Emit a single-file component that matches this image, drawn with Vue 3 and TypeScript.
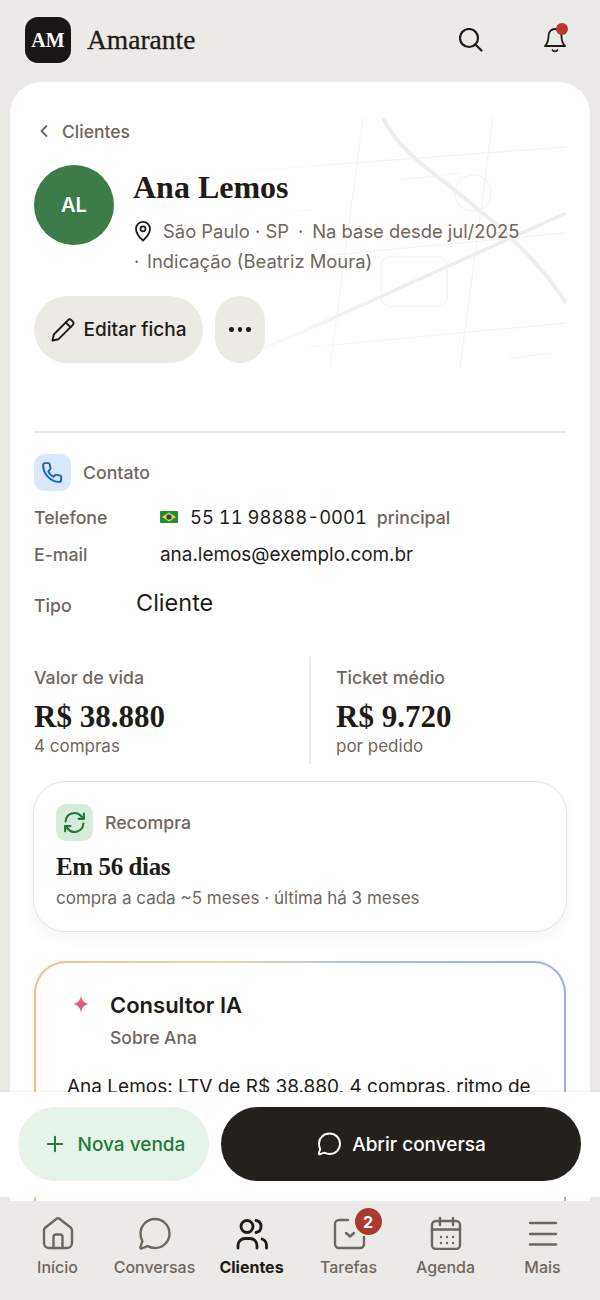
<script setup lang="ts">
/** Ficha do cliente — tela mobile */
interface Tab {
  label: string
  paths: string[]
  active?: boolean
  badge?: number
}

const tabs: Tab[] = [
  { label: 'Início', paths: ['M3 14.500a4 4 0 0 1 1.400-3L15 3.200a3 3 0 0 1 4 0l10.600 8.300a4 4 0 0 1 1.400 3V27a5 5 0 0 1-5 5H8a5 5 0 0 1-5-5Z', 'M12.500 32V21a2.500 2.500 0 0 1 2.500-2.500h4a2.500 2.500 0 0 1 2.500 2.500v11'] },
  { label: 'Conversas', paths: ['M17 3C25 3 31.500 9.500 31.500 17.500S25 32 17 32c-2.700 0-5.200-.7-7.300-1.900L3.500 32.500c-.7.2-1.300-.4-1.100-1.100l2-6.300C3 22.800 2.500 20.200 2.500 17.500 2.500 9.500 9 3 17 3Z'] },
  { label: 'Clientes', active: true, paths: ['M12 4.500a6 6 0 1 1 0 12 6 6 0 0 1 0-12Z', 'M21 4.500c3.200.5 5 3 5 6s-1.800 5.500-5 6', 'M3 32v-2.500a7 7 0 0 1 7-7h5a7 7 0 0 1 7 7V32', 'M27 23c2.500 1 4.500 3.500 4.500 6.500V32'] },
  { label: 'Tarefas', badge: 2, paths: ['M16 4H7a4 4 0 0 0-4 4v20a4 4 0 0 0 4 4h21a4 4 0 0 0 4-4v-7', 'M14 17l4 3.500 4-3.500'] },
  { label: 'Agenda', paths: ['M7 5h20a4 4 0 0 1 4 4v20a4 4 0 0 1-4 4H7a4 4 0 0 1-4-4V9a4 4 0 0 1 4-4Z', 'M3 13.500h28', 'M11 2v7', 'M24 2v7'] },
  { label: 'Mais', paths: ['M4 7h26', 'M4 18h26', 'M4 28.500h26'] },
]

const calendarDots = [
  [12, 21], [18, 21], [24, 21],
  [12, 27], [18, 27], [24, 27],
]
</script>

<template>
  <div class="screen">
    <header class="topbar">
      <div class="brand">
        <span class="logo">AM</span>
        <span class="brand-name">Amarante</span>
      </div>
      <div class="top-actions">
        <svg class="ic-search" viewBox="0 0 24 24" fill="none" stroke="#1f1b17" stroke-width="2.200" stroke-linecap="round">
          <circle cx="10" cy="10" r="9" />
          <path d="M16.500 16.500l6 6" />
        </svg>
        <div class="bell">
          <svg viewBox="0 0 24 26" fill="none" stroke="#1f1b17" stroke-width="1.800" stroke-linecap="round" stroke-linejoin="round">
            <path d="M12 2c-4 0-6.500 3-6.500 7 0 5-1.500 8-3.500 10h20c-2-2-3.500-5-3.500-10C18.500 5 16 2 12 2Z" />
            <path d="M9.500 23c.7 1.800 4.300 1.800 5 0" />
          </svg>
          <span class="bell-dot"></span>
        </div>
      </div>
    </header>

    <main class="sheet">
      <section class="hero">
        <svg class="map" viewBox="200 118 366 262" fill="none" stroke="#f3f2f0" stroke-width="1.200">
          <path class="thick" d="M383 118C398 150 430 170 467 200S540 262 566 303" stroke-width="4" />
          <path class="thick" d="M253 352 300 333 566 213" stroke-width="3.500" />
          <path d="M207 174 566 147" />
          <path d="M400 180 460 173" />
          <path d="M363 118 330 367" />
          <path d="M493 118 460 368" />
          <path d="M300 258 566 233" />
          <path d="M300 348 566 323" />
          <path d="M510 358 553 353" />
          <path d="M235 118 230 158" />
          <path d="M275 212 315 210" />
          <circle cx="473" cy="193" r="18" />
          <rect x="381" y="257" width="66" height="49" rx="8" />
        </svg>

        <div class="back">
          <svg viewBox="0 0 12 16" fill="none" stroke="#6f675e" stroke-width="1.800" stroke-linecap="round" stroke-linejoin="round">
            <path d="M8.500 3 3.500 8l5 5" />
          </svg>
          <span>Clientes</span>
        </div>

        <div class="identity">
          <div class="avatar">AL</div>
          <div class="identity-text">
            <h1>Ana Lemos</h1>
            <div class="meta">
              <div class="meta-line">
                <svg class="pin" viewBox="0 0 20 22" fill="none" stroke="#1f1b17" stroke-width="1.800" stroke-linejoin="round">
                  <path d="M10 20.500S3 14.500 3 8.800a7 7 0 0 1 14 0c0 5.700-7 11.700-7 11.700Z" />
                  <circle cx="10" cy="8.800" r="2.500" />
                </svg>
                <span>São Paulo · SP</span>
                <span class="sep">·</span>
                <span>Na base desde jul/2025</span>
              </div>
              <div class="meta-line">
                <span class="sep2">·</span>
                <span>Indicação (Beatriz Moura)</span>
              </div>
            </div>
          </div>
        </div>

        <div class="hero-actions">
          <button class="pill edit" type="button">
            <svg viewBox="0 0 24 24" fill="none" stroke="#1f1b17" stroke-width="1.900" stroke-linejoin="round" stroke-linecap="round">
              <path d="M1.500 22.500l1.300-6L16.800 2.300a2.700 2.700 0 0 1 3.800 0l1 1a2.700 2.700 0 0 1 0 3.800L7.500 21.200Z" />
              <path d="M14.800 4.500l4.700 4.700" />
            </svg>
            Editar ficha
          </button>
          <button class="pill more" type="button" aria-label="Mais">
            <i></i><i></i><i></i>
          </button>
        </div>
      </section>

      <section class="contact">
        <div class="section-head">
          <span class="icon-box blue">
            <svg viewBox="0 0 24 24" fill="none" stroke="#1d62c4" stroke-width="1.900" stroke-linejoin="round">
              <path d="M5 3h3.200a1 1 0 0 1 1 .8l.9 3.900a1 1 0 0 1-.3 1L8 11.200c1.100 2.400 2.600 3.900 5 5l1.600-1.800a1 1 0 0 1 1-.3l3.900.9a1 1 0 0 1 .8 1V19a2 2 0 0 1-2 2C10.500 21 3 13.500 3 5a2 2 0 0 1 2-2Z" />
            </svg>
          </span>
          <span>Contato</span>
        </div>
        <div class="row phone">
          <span class="row-label">Telefone</span>
          <svg class="flag" viewBox="0 0 18 12">
            <rect width="18" height="12" rx="1" fill="#1f8f3f" />
            <path d="M9 1.500 16 6l-7 4.500L2 6Z" fill="#f4d21f" />
            <circle cx="9" cy="6" r="2.600" fill="#1d3f8f" />
          </svg>
          <span class="phone-no">55 11 98888-0001</span>
          <span class="phone-tag">principal</span>
        </div>
        <div class="row mail">
          <span class="row-label">E-mail</span>
          <span class="mail-value">ana.lemos@exemplo.com.br</span>
        </div>
        <div class="row kind">
          <span class="row-label">Tipo</span>
          <span class="kind-value">Cliente</span>
        </div>
      </section>

      <section class="stats">
        <div class="stat">
          <span class="stat-label">Valor de vida</span>
          <strong>R$ 38.880</strong>
          <span class="stat-sub">4 compras</span>
        </div>
        <div class="stat second">
          <span class="stat-label">Ticket médio</span>
          <strong>R$ 9.720</strong>
          <span class="stat-sub">por pedido</span>
        </div>
      </section>

      <section class="card rebuy">
        <div class="section-head">
          <span class="icon-box green">
            <svg viewBox="0 0 24 24" fill="none" stroke="#23763c" stroke-width="2" stroke-linecap="round" stroke-linejoin="round">
              <path d="M3.500 11A8.500 8.500 0 0 1 18.500 6L21 8.500" />
              <path d="M21 3.500v5h-5" />
              <path d="M20.500 13A8.500 8.500 0 0 1 5.500 18L3 15.500" />
              <path d="M3 20.500v-5h5" />
            </svg>
          </span>
          <span>Recompra</span>
        </div>
        <h2>Em 56 dias</h2>
        <p>compra a cada ~5 meses · última há 3 meses</p>
      </section>

      <section class="advisor">
        <div class="advisor-head">
          <svg class="spark" viewBox="0 0 20 20">
            <defs>
              <linearGradient id="spark" x1="0.300" y1="0" x2="0.700" y2="1">
                <stop offset="0" stop-color="#f2913d" />
                <stop offset="0.500" stop-color="#e8557a" />
                <stop offset="1" stop-color="#a45fe0" />
              </linearGradient>
            </defs>
            <path d="M10 0c.8 5.600 3 8.800 8.500 10-5.500 1.200-7.700 4.400-8.500 10-.8-5.600-3-8.800-8.500-10C7 8.800 9.200 5.600 10 0Z" fill="url(#spark)" />
          </svg>
          <div>
            <h3>Consultor IA</h3>
            <span>Sobre Ana</span>
          </div>
        </div>
        <p>Ana Lemos: LTV de R$ 38.880, 4 compras, ritmo de</p>
      </section>
    </main>

    <div class="action-bar">
      <button class="cta sale" type="button">
        <svg viewBox="0 0 20 20" fill="none" stroke="#1f7a3d" stroke-width="2.200" stroke-linecap="round">
          <path d="M10 2v16M2 10h16" />
        </svg>
        Nova venda
      </button>
      <button class="cta chat" type="button">
        <svg viewBox="0 0 26 26" fill="none" stroke="#fff" stroke-width="1.900" stroke-linejoin="round">
          <path d="M13.500 2.500C19.500 2.500 24 7 24 12.800S19.500 23 13.500 23c-1.900 0-3.600-.5-5.100-1.300L3.500 23.300c-.5.200-.9-.3-.8-.7l1.500-4.400C3.400 16.700 3 14.800 3 12.800 3 7 7.500 2.500 13.500 2.500Z" />
        </svg>
        Abrir conversa
      </button>
    </div>

    <nav class="tabbar">
      <div v-for="tab in tabs" :key="tab.label" class="tab" :class="{ active: tab.active }">
        <div class="tab-icon">
          <svg viewBox="0 0 34 34" fill="none" stroke="currentColor" stroke-width="2.400" stroke-linecap="round" stroke-linejoin="round">
            <path v-for="d in tab.paths" :key="d" :d="d" />
            <template v-if="tab.label === 'Agenda'">
              <circle v-for="p in calendarDots" :key="p.join()" :cx="p[0]" :cy="p[1]" r="1.200" fill="currentColor" stroke="none" />
            </template>
          </svg>
          <span v-if="tab.badge" class="tab-badge">{{ tab.badge }}</span>
        </div>
        <span class="tab-label">{{ tab.label }}</span>
      </div>
    </nav>
  </div>
</template>

<style>
html, body { margin: 0; background: #ebeae6; }
</style>

<style scoped>
.screen {
  position: relative;
  width: 600px;
  height: 1300px;
  overflow: hidden;
  background: #ebeae6;
  font-family: Inter, "Liberation Sans", sans-serif;
  color: #1f1b17;
  display: flex;
  flex-direction: column;
}

/* Topo */
.topbar {
  flex: none;
  height: 82px;
  padding: 0 33px 2px 25px;
  box-sizing: border-box;
  display: flex;
  align-items: center;
  justify-content: space-between;
}
.brand { display: flex; align-items: center; gap: 16px; }
.logo {
  width: 46px;
  height: 46px;
  border-radius: 13px;
  background: #1a1613;
  color: #fff;
  font: 700 20px "Liberation Serif", serif;
  display: flex;
  align-items: center;
  justify-content: center;
}
.brand-name {
  font: 400 27.500px "Liberation Serif", serif;
  -webkit-text-stroke: 0.3px #1f1b17;
}
.top-actions { display: flex; align-items: center; gap: 60px; }
.ic-search { width: 24px; height: 24px; display: block; }
.bell { position: relative; width: 24px; height: 26px; }
.bell svg { width: 24px; height: 26px; display: block; }
.bell-dot {
  position: absolute;
  top: -4px;
  right: -1px;
  width: 12px;
  height: 12px;
  border-radius: 50%;
  background: #b5382c;
}

/* Folha branca */
.sheet {
  flex: 1;
  margin: 0 10px;
  background: #fff;
  border-radius: 32px 32px 0 0;
  padding: 0 24px;
  overflow: hidden;
}

.hero {
  position: relative;
  padding-top: 36px;
  height: 277px;
  padding-bottom: 36px;
  border-bottom: 2px solid #e8e7e3;
}
.map {
  position: absolute;
  left: 166px;
  top: 36px;
  width: 366px;
  height: 262px;
  -webkit-mask-image: linear-gradient(90deg, transparent 5%, #000 50%);
  mask-image: linear-gradient(90deg, transparent 5%, #000 50%);
}
.map .thick { stroke: #efeeeb; }
.back {
  position: relative;
  display: flex;
  align-items: center;
  gap: 12px;
  height: 26px;
  color: #6f675e;
  font-size: 17.500px;
  font-weight: 500;
}
.back svg { width: 12px; height: 16px; margin-left: 4px; }

.identity {
  position: relative;
  display: flex;
  gap: 19px;
  margin-top: 21px;
}
.avatar {
  flex: none;
  width: 80px;
  height: 80px;
  border-radius: 50%;
  background: #3d7c48;
  color: #fff;
  font-size: 20px;
  font-weight: 600;
  display: flex;
  align-items: center;
  justify-content: center;
}
.identity-text { min-width: 0; }
h1 {
  margin: 0;
  font: 700 32px/44px "Liberation Serif", serif;
}
.meta {
  margin-top: 7px;
  font-size: 18.400px;
  line-height: 30px;
  color: #6f675e;
}
.meta-line { display: flex; align-items: center; white-space: nowrap; }
.pin {
  flex: none;
  width: 20px;
  height: 22px;
  margin-right: 10px;
}
.sep { margin: 0 9px; }
.sep2 { width: 14px; padding-left: 1px; box-sizing: border-box; }

.hero-actions {
  position: relative;
  display: flex;
  gap: 12px;
  margin-top: 20px;
}
.pill {
  height: 67px;
  border: 0;
  border-radius: 34px;
  background: #eceae5;
  font-family: inherit;
  color: #1f1b17;
  display: flex;
  align-items: center;
  justify-content: center;
}
.edit {
  width: 169px;
  gap: 9px;
  font-size: 19px;
  font-weight: 500;
  padding: 0;
}
.edit svg { width: 24px; height: 24px; }
.more { width: 50px; gap: 4px; padding: 0; }
.more i {
  width: 4.500px;
  height: 4.500px;
  border-radius: 50%;
  background: #1f1b17;
}

/* Contato */
.contact { padding-top: 21px; }
.section-head {
  display: flex;
  align-items: center;
  gap: 12px;
  color: #6f675e;
  font-size: 17.700px;
  font-weight: 450;
}
.icon-box {
  width: 37px;
  height: 37px;
  border-radius: 10px;
  display: flex;
  align-items: center;
  justify-content: center;
}
.icon-box svg { width: 25px; height: 25px; }
.blue { background: #d9e8fb; }
.green { background: #d4ecd9; }

.row { display: flex; align-items: center; }
.row-label {
  width: 126px;
  color: #6f675e;
  font-size: 17.700px;
  font-weight: 450;
}
.phone { margin-top: 13px; height: 26px; }
.flag { width: 18px; height: 12px; margin-right: 12px; }
.phone-no { font-size: 18.400px; font-variant-numeric: tabular-nums; }
.phone-tag {
  margin-left: 10px;
  color: #6f675e;
  font-size: 17.700px;
  font-weight: 450;
}
.mail { margin-top: 11px; height: 26px; }
.mail-value { font-size: 18.900px; }
.kind { margin-top: 17px; height: 36px; }
.kind .row-label { width: 102px; padding-top: 6px; }
.kind-value { font-size: 23.500px; }

/* Indicadores */
.stats {
  display: grid;
  grid-template-columns: 275px 1fr;
  margin-top: 37px;
}
.stat {
  height: 107px;
  display: flex;
  flex-direction: column;
  padding-top: 9px;
  box-sizing: border-box;
}
.second { border-left: 2px solid #ecebe7; padding-left: 25px; }
.stat-label { color: #6f675e; font-size: 17.700px; font-weight: 450; line-height: 24px; }
.stat strong {
  font: 700 31px/35px "Liberation Serif", serif;
  margin-top: 9px;
}
.stat-sub { color: #6f675e; font-size: 17px; line-height: 24px; }

/* Recompra */
.card {
  margin: 17px -1px 0;
  height: 151px;
  box-sizing: border-box;
  border: 1.500px solid #e4e3df;
  border-radius: 32px;
  padding: 22px 22px;
  box-shadow: 0 6px 16px rgba(40, 30, 20, 0.04);
}
.card h2 {
  margin: 8px 0 0;
  font: 700 25px/36px "Liberation Serif", serif;
  letter-spacing: -0.4px;
}
.card p {
  margin: 1px 0 0;
  color: #6f675e;
  font-size: 17px;
  line-height: 24px;
}

/* Consultor IA */
.advisor {
  margin-top: 29px;
  height: 320px;
  box-sizing: border-box;
  border: 2px solid transparent;
  border-radius: 32px;
  background:
    linear-gradient(#fff, #fff) padding-box,
    linear-gradient(90deg, #f6bd82 0%, #f4d79c 35%, #9fc0e8 65%, #9fabf2 100%) border-box;
  padding: 24px 31px;
}
.advisor-head { display: flex; gap: 20px; }
.spark { width: 18px; height: 20px; margin: 7px 0 0 5px; flex: none; }
h3 { margin: 0; font-size: 22px; font-weight: 600; line-height: 36px; }
.advisor-head span {
  display: block;
  color: #6f675e;
  font-size: 17.500px;
  font-weight: 450;
  line-height: 30px;
}
.advisor p {
  margin: 20px 0 0;
  font-size: 19px;
  line-height: 28px;
  white-space: nowrap;
}

/* Barra de ações (sobre a folha) */
.action-bar {
  position: absolute;
  left: 0;
  right: 0;
  top: 1092px;
  height: 105px;
  background: #fff;
  box-sizing: border-box;
  padding: 15px 19px 16px 18px;
  display: flex;
  gap: 12px;
  box-shadow: 0 -1px 2px rgba(40, 30, 20, 0.06);
}
.cta {
  height: 74px;
  border: 0;
  border-radius: 37px;
  font-family: inherit;
  font-size: 19px;
  font-weight: 500;
  display: flex;
  align-items: center;
  justify-content: center;
  gap: 10px;
  padding: 0;
}
.sale { width: 191px; gap: 14px; padding-left: 4px; background: #e5f3e8; color: #1f7a3d; }
.sale svg { width: 18px; height: 18px; }
.chat { flex: 1; background: #24201b; color: #fff; }
.chat svg { width: 26px; height: 26px; }

/* Abas */
.tabbar {
  position: absolute;
  left: 0;
  right: 0;
  top: 1201px;
  height: 99px;
  background: #ebeae6;
  box-sizing: border-box;
  padding: 15px 9px 0;
  display: grid;
  grid-template-columns: repeat(6, 1fr);
}
.tab {
  display: flex;
  flex-direction: column;
  align-items: center;
  color: #6f675e;
}
.tab.active { color: #1f1b17; }
.tab.active svg { stroke-width: 2.800; }
.tab-icon { position: relative; width: 34px; height: 34px; }
.tab-icon svg { width: 34px; height: 34px; display: block; }
.tab-label {
  margin-top: 7px;
  font-size: 16px;
  font-weight: 500;
  line-height: 20px;
}
.tab.active .tab-label { font-weight: 700; }
.tab-badge {
  position: absolute;
  top: -8px;
  right: -16px;
  width: 27px;
  height: 27px;
  border-radius: 50%;
  background: #aa3a2e;
  color: #fff;
  font-size: 16px;
  font-weight: 700;
  display: flex;
  align-items: center;
  justify-content: center;
}
</style>
